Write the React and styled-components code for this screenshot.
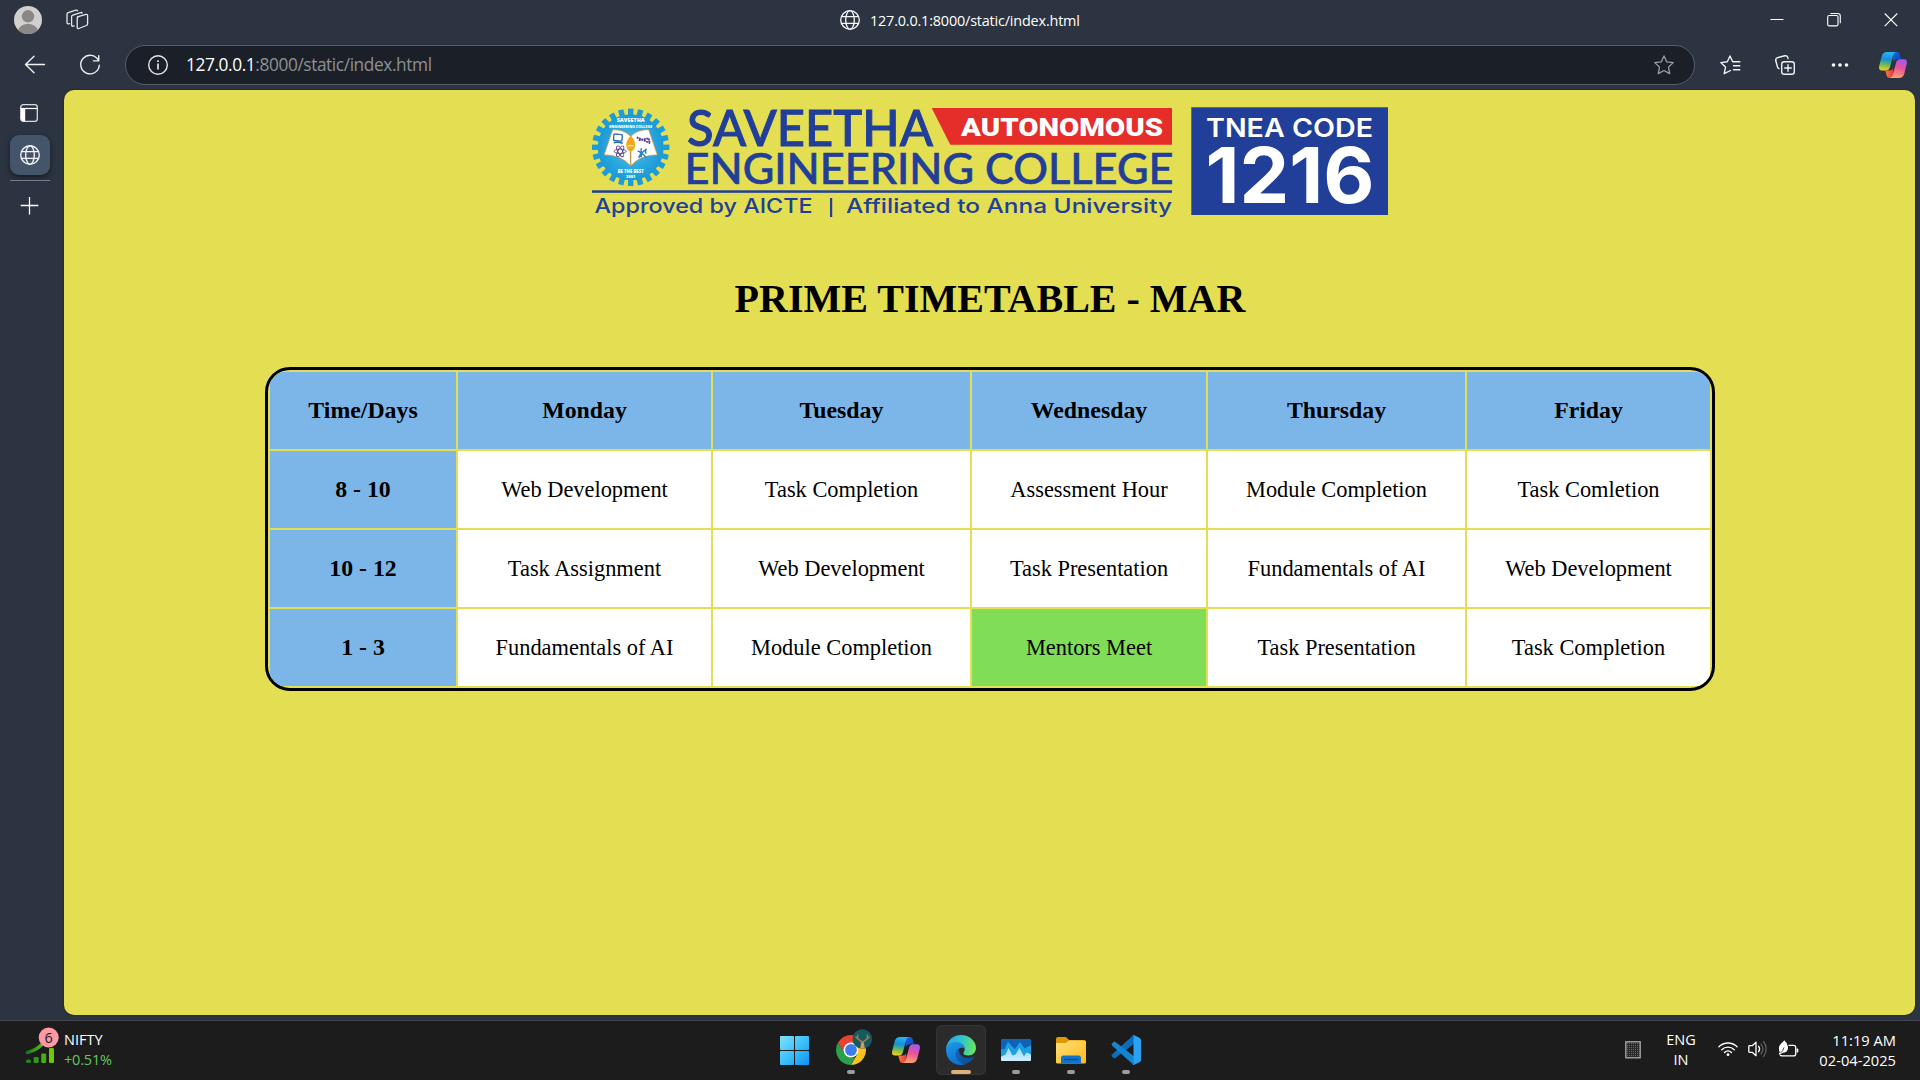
import React from "react";
import styled, { createGlobalStyle } from "styled-components";

const UI = `"Open Sans", "Noto Sans", sans-serif`;
const SERIF = `"Liberation Serif", "Times New Roman", serif`;

const GlobalStyle = createGlobalStyle`
  * { box-sizing: border-box; }
  html, body { margin: 0; padding: 0; background: #2b3440; overflow: hidden; }
  svg { display: block; flex: none; overflow: visible; }
`;

/* ---------- layout ---------- */
const Screen = styled.div`
  width: 1920px;
  height: 1080px;
  display: flex;
  flex-direction: column;
  background: #2b3440;
  font-family: ${UI};
  color: #fff;
  overflow: hidden;
`;

const TitleBar = styled.header`
  height: 40px;
  display: grid;
  grid-template-columns: 400px 1fr 400px;
  align-items: center;
`;

const TitleLeft = styled.div`
  display: flex;
  align-items: center;
  gap: 24px;
  padding-left: 14px;
`;

const TitleCenter = styled.div`
  display: flex;
  align-items: center;
  gap: 10px;
  justify-self: start;
  padding-left: 440px;
`;

const WindowButtons = styled.div`
  display: flex;
  justify-content: flex-end;
  align-items: center;
  gap: 43px;
  padding-right: 22px;
`;

const Label = styled.span`
  font-size: ${(p) => p.$size || 15}px;
  line-height: ${(p) => p.$line || 20}px;
  letter-spacing: ${(p) => p.$track || 0}px;
  padding-top: ${(p) => p.$top || 0}px;
  color: ${(p) => p.$color || "#fff"};
  white-space: nowrap;
`;

const ToolBar = styled.nav`
  height: 50px;
  display: flex;
  align-items: center;
  padding-left: 24px;
`;

const NavButtons = styled.div`
  display: flex;
  align-items: center;
  gap: 34px;
  width: 101px;
`;

const AddressBar = styled.div`
  width: 1570px;
  height: 40px;
  border: 1px solid #565d66;
  border-radius: 20px;
  background: #1b2028;
  display: flex;
  align-items: center;
  padding: 0 20px 0 22px;
`;

const Url = styled.div`
  flex: 1;
  padding-left: 18px;
  font-size: 17.3px;
  line-height: 24px;
  letter-spacing: -0.4px;
  color: #8d9094;
  strong {
    font-weight: 400;
    color: #fff;
  }
`;

const ToolIcons = styled.div`
  display: flex;
  align-items: center;
  padding-left: 25px;
`;

const ToolSlot = styled.span`
  margin-right: ${(p) => p.$after}px;
`;

const Body = styled.div`
  height: 930px;
  display: flex;
`;

const SideTabs = styled.aside`
  width: 64px;
  display: flex;
  flex-direction: column;
  padding: 14px 0 0 10px;
`;

const SideSlot = styled.div`
  width: 40px;
  height: ${(p) => p.$height}px;
  display: flex;
  justify-content: center;
  padding-right: 2px;
`;

const ActiveTab = styled.div`
  width: 40px;
  height: 40px;
  border-radius: 9px;
  background: #44546a;
  box-shadow: 0 2px 5px rgba(0, 0, 0, 0.5);
  display: flex;
  align-items: center;
  justify-content: center;
`;

const Divider = styled.hr`
  width: 40px;
  height: 1px;
  border: 0;
  margin: 5px 0 16px;
  background: #767d86;
`;

const Page = styled.main`
  width: 1851px;
  height: 925px;
  border-radius: 10px;
  background: #e3de52;
  box-shadow: 0 0 2px rgba(0, 0, 0, 0.5);
  display: flex;
  flex-direction: column;
  align-items: center;
  padding-top: 15px;
`;

const Banner = styled.div`
  margin-left: 2px;
`;

const Heading = styled.h1`
  margin: 54px 0 0 1px;
  font-family: ${SERIF};
  font-size: 40px;
  line-height: 48px;
  font-weight: 700;
  color: #000;
  white-space: nowrap;
`;

const TimeTable = styled.section`
  margin-top: 44px;
  width: 1450px;
  height: 324px;
  border: 3px solid #000;
  border-radius: 25px;
  padding: 2px;
  overflow: hidden;
  display: grid;
  grid-template-columns: 186px 253px 257px 234px 257px 243px;
  grid-auto-rows: 77px;
  gap: 2px;
`;

const CELL = { head: "#7cb6e9", plain: "#fff", meet: "#7fdd57" };

const Cell = styled.div`
  display: flex;
  align-items: center;
  justify-content: center;
  padding-left: 1px;
  background: ${(p) => CELL[p.$kind]};
  color: #000;
  font-family: ${SERIF};
  font-size: ${(p) => (p.$kind === "head" ? 23.8 : 22.4)}px;
  line-height: 27px;
  font-weight: ${(p) => (p.$kind === "head" ? 700 : 400)};
  white-space: nowrap;
`;

/* ---------- taskbar ---------- */
const TaskBar = styled.footer`
  height: 60px;
  background: #1c1c1c;
  border-top: 1px solid #43474b;
  display: grid;
  grid-template-columns: 771px 390px 1fr;
`;

const Widget = styled.div`
  display: flex;
  align-items: flex-start;
  gap: 10px;
  padding: 6px 0 0 26px;
`;

const Lines = styled.div`
  display: flex;
  flex-direction: column;
  align-items: ${(p) => p.$align || "flex-start"};
  width: ${(p) => (p.$width ? `${p.$width}px` : "auto")};
`;

const Apps = styled.div`
  display: flex;
  align-items: flex-start;
  gap: 5px;
  padding-top: 4px;
`;

const AppTile = styled.div`
  width: 50px;
  height: 50px;
  border-radius: 6px;
  background: ${(p) => (p.$active ? "#2b2b2b" : "transparent")};
  box-shadow: ${(p) => (p.$active ? "inset 0 0 0 1px #353535" : "none")};
  display: flex;
  flex-direction: column;
  align-items: center;
  justify-content: space-between;
  padding: 10px 0 1px;
`;

const AppIcon = styled.span`
  height: 30px;
  display: flex;
  align-items: center;
`;

const Running = styled.span`
  width: ${(p) => (p.$active ? 20 : 8)}px;
  height: 4px;
  border-radius: 2px;
  background: ${(p) => (p.$active ? "#dfae7d" : p.$on ? "#9b9b9b" : "transparent")};
`;

const Tray = styled.div`
  display: flex;
  justify-content: flex-end;
  align-items: flex-start;
  padding: 9px 24px 0 0;
`;

const TrayIcons = styled.div`
  display: flex;
  gap: 10px;
  align-items: center;
  padding: 10px 0 0 22px;
`;

const TraySquare = styled.div`
  padding: 11px 25px 0 0;
`;

/* ---------- line icons ---------- */
const Avatar = () => (
  <svg width="28" height="28" viewBox="0 0 28 28">
    <defs>
      <clipPath id="av"><circle cx="14" cy="14" r="14" /></clipPath>
    </defs>
    <circle cx="14" cy="14" r="14" fill="#d2d0ce" />
    <g clipPath="url(#av)" fill="#8a8886">
      <circle cx="14" cy="10.3" r="6.2" />
      <ellipse cx="14" cy="26.5" rx="10.3" ry="8.8" />
    </g>
  </svg>
);

const Workspaces = () => (
  <svg width="23" height="22" viewBox="0 0 23 22" fill="none" stroke="#e6e8ea" strokeWidth="1.3" strokeLinecap="round" strokeLinejoin="round">
    <path d="M11.3 7.9 20 5.4q1.6-.4 1.6 1.2v8.2q0 1.3-1.2 1.7l-7.6 3q-1.6.6-1.6-1.2V9.8q0-1.5 1.1-1.9z" />
    <path d="M8.2 16.9 7 17.2q-1.4.3-1.4-1.2V7.7q0-1.2 1.2-1.6l7.7-2.5q1.3-.4 1.7.6" />
    <path d="M3.5 14.6l-1 .2Q1 15 1 13.600V5.200Q1 4 2.200 3.600L9.900 1.200q1.300-.4 1.700.5" />
  </svg>
);

const Globe = () => (
  <svg width="20" height="20" viewBox="0 0 20 20" fill="none" stroke="#f3f4f5" strokeWidth="1.35">
    <circle cx="10" cy="10" r="9.3" />
    <ellipse cx="10" cy="10" rx="4.3" ry="9.3" />
    <path d="M1.500 6.600h17M1.500 13.400h17" />
  </svg>
);

const Minimize = () => (
  <svg width="14" height="14" viewBox="0 0 14 14"><path d="M.5 6.500h13" stroke="#fff" /></svg>
);
const Restore = () => (
  <svg width="14" height="14" viewBox="0 0 14 14" fill="none" stroke="#fff" strokeWidth="1.100">
    <rect x=".7" y="2.500" width="10.300" height="10.400" rx="1.500" />
    <path d="M3.400.5h7.300q2.600 0 2.600 2.600v7.200" />
  </svg>
);
const Close = () => (
  <svg width="14" height="14" viewBox="0 0 14 14"><path d="M.7.5l12.600 12.600M13.300.5.7 13.100" stroke="#fff" strokeWidth="1.100" /></svg>
);

const Back = () => (
  <svg width="22" height="20" viewBox="0 0 22 20" fill="none" stroke="#f0f1f2" strokeWidth="1.400" strokeLinecap="round" strokeLinejoin="round">
    <path d="M20.500 9.500H1.700M10 1.200 1.500 9.500 10 17.800" />
  </svg>
);
const Refresh = () => (
  <svg width="20" height="20" viewBox="0 0 20 20" fill="none" stroke="#f0f1f2" strokeWidth="1.400" strokeLinecap="round" strokeLinejoin="round">
    <path d="M18.300 5.300A9.300 9.300 0 1 0 19.300 10.200" />
    <path d="M18.700.8v5.100h-5.300" />
  </svg>
);
const Info = () => (
  <svg width="20" height="20" viewBox="0 0 20 20" fill="none" stroke="#e4e5e6" strokeWidth="1.400">
    <circle cx="10" cy="10" r="9.300" />
    <path d="M10 8.600V14.500M10 5.200v1.900" strokeWidth="1.700" />
  </svg>
);
const Star = () => (
  <svg width="20" height="20" viewBox="0 0 20 20" fill="none" stroke="#9a9da1" strokeWidth="1.300" strokeLinejoin="round">
    <path d="M10 .9l2.700 5.900 6.500.8-4.700 4.500 1.200 6.500L10 15.500l-5.700 3.100 1.200-6.500L.8 7.600l6.500-.8z" />
  </svg>
);
const StarList = () => (
  <svg width="21" height="20" viewBox="0 0 21 20" fill="none" stroke="#f0f1f2" strokeWidth="1.400" strokeLinecap="round" strokeLinejoin="round">
    <path d="M19.800 6.800H12.700L10 1 7.300 6.800.8 7.600l4.700 4.500-1.300 6.600 6.300-3.200" />
    <path d="M13.500 10.800h6.300M13.500 14.800h6.300" />
  </svg>
);
const Collections = () => (
  <svg width="20" height="20" viewBox="0 0 20 20" fill="none" stroke="#f0f1f2" strokeWidth="1.400" strokeLinecap="round" strokeLinejoin="round">
    <rect x="6.700" y="6.700" width="12.600" height="12.600" rx="2.600" />
    <path d="M13 9.700v6.600M9.700 13h6.600" />
    <path d="M3.900 13.700Q2.900 13.200 2.500 12L.8 5.800Q.3 3.400 2.500 2.700L9.800.8q2.300-.5 3 1.600l.3 1.200" />
  </svg>
);
const Dots = () => (
  <svg width="18" height="6" viewBox="0 0 18 6" fill="#fff">
    <circle cx="2.500" cy="3" r="1.800" /><circle cx="9" cy="3" r="1.800" /><circle cx="15.500" cy="3" r="1.800" />
  </svg>
);
const TabLayout = () => (
  <svg width="18" height="18" viewBox="0 0 18 18" fill="none">
    <rect x=".7" y=".7" width="16.600" height="16.600" rx="2.600" stroke="#d9dbde" strokeWidth="1.300" />
    <path d="M.7 4.500h16.600" stroke="#fff" strokeWidth="1.200" />
    <path d="M1 4.500h4.200v12.700H3Q1 17.200 1 15z" fill="#fff" />
  </svg>
);
const Plus = () => (
  <svg width="18" height="18" viewBox="0 0 18 18"><path d="M9.500 0v17.500M.7 8.500h17.600" stroke="#fff" strokeWidth="1.300" /></svg>
);

/* ---------- colour icons ---------- */
const Copilot = ({ id, size = 28 }) => (
  <svg width={size} height={size * 0.93} viewBox="0 0 28 26">
    <defs>
      <linearGradient id={`${id}a`} x1=".5" y1="0" x2=".35" y2="1">
        <stop offset="0" stopColor="#27b5f2" /><stop offset=".4" stopColor="#168fd8" /><stop offset=".65" stopColor="#5bb66b" /><stop offset="1" stopColor="#f5d20a" />
      </linearGradient>
      <linearGradient id={`${id}b`} x1=".7" y1="0" x2=".4" y2="1">
        <stop offset="0" stopColor="#a259f2" /><stop offset=".45" stopColor="#e6529b" /><stop offset="1" stopColor="#ffa269" />
      </linearGradient>
      <linearGradient id={`${id}c`} x1="0" y1="0" x2="1" y2="1">
        <stop offset="0" stopColor="#1a6be0" /><stop offset="1" stopColor="#0b3fb8" />
      </linearGradient>
      <linearGradient id={`${id}d`} x1="0" y1="0" x2="1" y2="0">
        <stop offset="0" stopColor="#ff7a3d" /><stop offset="1" stopColor="#e8324a" />
      </linearGradient>
    </defs>
    <path d="M13 0h5q2 0 2.700 2.200l1.500 5H17.500q-2.500 0-3.300 2.500z" fill={`url(#${id}c)`} />
    <path d="M15 26h-4.500q-2.200 0-2.800-2.300L6.300 18.500H11q2.200 0 3-2.300z" fill={`url(#${id}d)`} />
    <path d="M8 0h9q-2 .4-2.900 3.200L11 15q-1 3.500-4.200 3.500H3.200q-4 0-3-4.500L2.700 4.200Q4 0 8 0z" fill={`url(#${id}a)`} />
    <path d="M20 26h-9q2-.4 2.900-3.200L17 11q1-3.700 4.200-3.700h3.600q4 0 3 4.500L25.300 21.800Q24 26 20 26z" fill={`url(#${id}b)`} />
  </svg>
);

const Stocks = () => (
  <svg width="28" height="38" viewBox="0 0 28 38">
    <defs>
      <linearGradient id="stk" x1="0" x2="1"><stop offset="0" stopColor="#12781f" /><stop offset="1" stopColor="#72c80a" /></linearGradient>
    </defs>
    <path d="M1.500 25.500Q12 23 19 14" fill="none" stroke="url(#stk)" strokeWidth="3.600" strokeLinecap="round" />
    <rect x="0" y="32.500" width="5" height="3.500" rx="1.500" fill="#1c8620" />
    <rect x="7.700" y="30" width="5" height="6" rx="1.200" fill="#2f981c" />
    <rect x="15.200" y="26.500" width="5" height="9.500" rx="1.200" fill="#4cac14" />
    <rect x="23" y="21" width="5" height="15" rx="1.200" fill="#70c70a" />
    <circle cx="22.700" cy="10.500" r="10" fill="#ff99a4" />
    <text x="22.700" y="15.700" textAnchor="middle" fontFamily={UI} fontSize="14.500" fill="#1c1c1c">6</text>
  </svg>
);

const WindowsLogo = () => (
  <svg width="32" height="30" viewBox="0 0 32 30">
    <defs>
      <linearGradient id="win" gradientUnits="userSpaceOnUse" x1="0" y1="0" x2="30" y2="30"><stop offset="0" stopColor="#86e2fb" /><stop offset=".5" stopColor="#3dc1fa" /><stop offset="1" stopColor="#0a90f5" /></linearGradient>
    </defs>
    <g fill="url(#win)">
      <rect x="0" y="1" width="14" height="14" rx=".8" /><rect x="15" y="1" width="14" height="14" rx=".8" />
      <rect x="0" y="16" width="14" height="14" rx=".8" /><rect x="15" y="16" width="14" height="14" rx=".8" />
    </g>
  </svg>
);

const ChromeLogo = () => (
  <svg width="30" height="30" viewBox="0 0 30 30">
    <path d="M2.010 7.500A15 15 0 0 1 27.990 7.500H15L8.500 18.750z" fill="#e94235" />
    <path d="M27.990 7.500A15 15 0 0 1 15 30l6.500-11.250L15 7.500z" fill="#fcc31e" />
    <path d="M15 30A15 15 0 0 1 2.010 7.500L8.500 18.750 15 22.500h4.330z" fill="#2aa04a" />
    <circle cx="15" cy="15" r="7.500" fill="#fff" />
    <circle cx="15" cy="15" r="5.900" fill="#3b7ded" />
    <circle cx="26.300" cy="4" r="9.800" fill="#155a5e" />
    <path d="M24.800 13.500l.8-6.500-4.500-3.500M28.200 13.500l-.9-6.500 4.500-3.500M21.500-.5l.5 4.500 4.500 3 4.500-3 .5-4.500M19.500 1.500l2 2M33.500 1.500l-2 2" fill="none" stroke="#a9794c" strokeWidth="1.300" />
    <path d="M24.400 13.600l1-6h2.200l1 6z" fill="#d39a5e" />
  </svg>
);

const EdgeLogo = () => (
  <svg width="30" height="30" viewBox="0 0 30 30">
    <defs>
      <linearGradient id="eg1" x1="0" y1=".4" x2="1" y2=".5"><stop offset="0" stopColor="#2aa5e3" /><stop offset=".5" stopColor="#2fc2cf" /><stop offset="1" stopColor="#6ae75a" /></linearGradient>
      <linearGradient id="eg2" x1="0" y1="0" x2=".5" y2="1"><stop offset="0" stopColor="#1e9be6" /><stop offset="1" stopColor="#0b70cf" /></linearGradient>
      <linearGradient id="eg3" x1="0" y1="0" x2="1" y2="1"><stop offset="0" stopColor="#1565bd" /><stop offset="1" stopColor="#0d4a92" /></linearGradient>
    </defs>
    <path d="M0 14.500C.4 6 7 0 15 0c8.500 0 15 6.200 15 13 0 4.500-3.300 7.500-7.700 7.500-3.500 0-5-1.200-5-2.200 0-1 1.400-1.600 1.400-4.300C18.700 10.500 15 8 10.500 8 5 8 1 11 0 14.500z" fill="url(#eg1)" />
    <path d="M0 15C.2 10.500 4.500 7 9.800 7c5 0 8.900 3 8.900 7-1.500-2.300-6.700-2-7.700 3.200C10 23.500 14.500 28.500 20 29c-1.500.7-3.200 1-5 1C6.500 30 0 23.500 0 15z" fill="url(#eg2)" />
    <path d="M12.600 13.400C7 17.500 9.500 28 20 29c3.500-1.300 6.500-3.800 7.700-6.200.4-.9-.3-1.300-1-.9-6 3.200-14.200 0-14.100-8.500z" fill="url(#eg3)" />
  </svg>
);

const MonitorLogo = () => (
  <svg width="30" height="30" viewBox="0 0 30 30">
    <defs>
      <linearGradient id="mn" x1="0" y1="0" x2="0" y2="1"><stop offset="0" stopColor="#9fdcf8" /><stop offset="1" stopColor="#cdeefd" /></linearGradient>
    </defs>
    <rect y="4" width="30" height="22" rx="1" fill="#0f62b4" />
    <path d="M0 14l3.500.5L7 6.500l4 5 3 2.500 5-7 4.500 6.500L30 10v15H0z" fill="#1f9fe3" />
    <path d="M0 21.500l4.500-1.700L7.500 13l4 7.500 3-1 4-6.500 4.500 8.500 2.500-4 4.500 2V25q0 1-1 1H1q-1 0-1-1z" fill="url(#mn)" />
  </svg>
);

const FolderLogo = () => (
  <svg width="30" height="30" viewBox="0 0 30 30">
    <defs>
      <linearGradient id="fo" x1="0" y1="0" x2="1" y2="1"><stop offset="0" stopColor="#ffe07a" /><stop offset="1" stopColor="#fbb917" /></linearGradient>
    </defs>
    <path d="M0 4q0-2 2-2h7q1 0 2 1l2 2h14q3 0 3 2v8H0z" fill="#dd9a06" />
    <path d="M0 8h10l3-2.500h15.500Q30 5.500 30 7v20q0 1.500-1.500 1.500h-27Q0 28.500 0 27z" fill="url(#fo)" />
    <path d="M5 28.500V23q0-2.500 2.500-2.500h15Q25 20.500 25 23v5.500z" fill="#1173c9" />
    <path d="M8.500 24.500h13" stroke="#0b4f98" strokeWidth="1.300" strokeLinecap="round" />
  </svg>
);

const CodeLogo = () => (
  <svg width="30" height="30" viewBox="0 0 30 30">
    <path d="M22 .5 1 19.600q-1 1 0 2l1.600 1.500q.8.700 1.800 0L24 8z" fill="#0a6fb8" />
    <path d="M22 29.500 1 10.400q-1-1 0-2L2.600 6.900q.8-.7 1.800 0L24 22z" fill="#1485d1" />
    <path d="M21.500.3q.8-.5 1.800 0l5.400 2.600Q30 3.600 30 5v20q0 1.400-1.300 2.100l-5.400 2.600q-1.200.5-2-.3 1.200.4 1.200-1.200V1.800q0-1.600-1-1.500z" fill="#2aa2f2" />
  </svg>
);

const TrayGrid = () => (
  <svg width="16" height="18" viewBox="0 0 16 18">
    <defs>
      <pattern id="dotgrid" width="2" height="2" patternUnits="userSpaceOnUse"><rect width="2" height="2" fill="#2b2b2b" /><rect width="1" height="1" fill="#626262" /></pattern>
    </defs>
    <rect x=".8" y=".8" width="14.400" height="16" fill="url(#dotgrid)" stroke="#a9a9a9" strokeWidth="1.300" />
  </svg>
);
const Wifi = () => (
  <svg width="20" height="16" viewBox="0 0 20 16" fill="none" stroke="#fff" strokeWidth="1.400" strokeLinecap="round">
    <path d="M.9 5.700a13 13 0 0 1 18.200 0M3.700 8.700a9 9 0 0 1 12.600 0M6.500 11.500a5 5 0 0 1 7 0" />
    <circle cx="10" cy="13.700" r="1.400" fill="#fff" stroke="none" />
  </svg>
);
const Speaker = () => (
  <svg width="20" height="18" viewBox="0 0 20 18" fill="none" stroke="#fff" strokeWidth="1.300" strokeLinecap="round" strokeLinejoin="round">
    <path d="M.8 6.400q0-.7.700-.7h2.700L8 2.300v13.400l-3.800-3.400H1.500q-.7 0-.7-.7z" />
    <path d="M10.600 6.300a4.500 4.500 0 0 1 0 5.400" />
    <path d="M13 4.100a8 8 0 0 1 0 9.800M15.500 1.500a12 12 0 0 1 0 15" stroke="#5d5d5d" />
  </svg>
);
const Battery = () => (
  <svg width="22" height="18" viewBox="0 0 22 18" fill="none" stroke="#fff" strokeWidth="1.300">
    <path d="M10.500 5.300H15.500q2.200 0 2.200 2v6.400q0 2.200-2.200 2.200H4.300Q2.500 15.900 2 14.700" />
    <path d="M18.600 8.500h.8q.9 0 .9.900v2.200q0 .9-.9.900h-.8z" fill="#fff" stroke="none" />
    <path d="M6.200.3Q9.500 3 10 7q.2 4.500-3.500 5.600L4.300 13 1.500 14.700.8 13.600l1-1Q-.6 6.700 3.600 3 5.300 1.700 6.200.3z" fill="#fff" stroke="none" />
    <path d="M2.500 13Q5 11 6 7.500" stroke="#1c1c1c" strokeWidth=".8" />
  </svg>
);

/* ---------- college banner ---------- */
const NAVY = "#213f99";

const TEETH = Array.from({ length: 24 }, (_, i) => i * 15);

const CollegeBanner = () => (
  <svg width="797" height="116" viewBox="592 105 797 116" role="img">
    <defs>
      <radialGradient id="gear"><stop offset="0" stopColor="#4cc0ec" /><stop offset="1" stopColor="#1b9ad6" /></radialGradient>
    </defs>
    <g transform="translate(630.7 147.300)">
      {TEETH.map((a) => (
        <rect key={a} x="-2.700" y="-38.700" width="5.400" height="9" fill="#1f9cd8" transform={`rotate(${a})`} />
      ))}
      <circle r="33" fill="url(#gear)" />
      <g fill="#fff" textAnchor="middle" fontFamily={`"Open Sans", sans-serif`} fontWeight="800">
        <text y="-25" fontSize="5.600" textLength="28" lengthAdjust="spacingAndGlyphs" x="0">SAVEETHA</text>
        <text y="-19.300" fontSize="3.600" textLength="43" lengthAdjust="spacingAndGlyphs" x="0">ENGINEERING COLLEGE</text>
        <text y="25.700" fontSize="4.600" textLength="26" lengthAdjust="spacingAndGlyphs" x="0">BE THE BEST</text>
        <text y="30.500" fontSize="4" x="0">2001</text>
      </g>
      <path d="M-18-17.500Q-7-18 0-11 7-18 18-17.500L26.500 7.500Q10 7.500 0 18.500-10 7.500-26.500 7.500z" fill="#fff" stroke="#d99b3c" strokeWidth=".7" />
      <path d="M0-11v29" stroke="#b98532" strokeWidth="1.100" />
      <path d="M0-12q6 7 4 12.500Q2.500 4 0 4T-4 .5Q-6-5 0-12z" fill="#f3a71b" />
      <path d="M-3-1.500h6" stroke="#fff" strokeWidth="1" />
      <g fill="none" stroke="#2b6fb5" strokeWidth="1.400">
        <rect x="-17" y="-13" width="8.500" height="6.500" rx="1" transform="rotate(5 -13 -10)" />
        <path d="M-17-4.500q4-1.500 9 .5" strokeWidth="1.700" />
      </g>
      <g fill="none" stroke="#5a3c94" strokeWidth=".9">
        <ellipse cx="-10.500" cy="4" rx="6" ry="2.200" />
        <ellipse cx="-10.500" cy="4" rx="6" ry="2.200" transform="rotate(60 -10.500 4)" />
        <ellipse cx="-10.500" cy="4" rx="6" ry="2.200" transform="rotate(120 -10.500 4)" />
        <path d="M6-10l7 3 6.500 3M8-7l10-2 1 5" strokeWidth="1.800" strokeDasharray="2 .6" />
      </g>
      <path d="M7 3.500l4 2 5-4M8 10.500l2.500-5 5.500 5M10.500 1v9M15 2.500v4" fill="none" stroke="#2b83c5" strokeWidth="1.500" />
    </g>

    <g fill={NAVY} fontFamily="Lato, sans-serif">
      <text x="687" y="146" fontSize="51" fontWeight="500" stroke={NAVY} strokeWidth="1" textLength="246" lengthAdjust="spacingAndGlyphs">SAVEETHA</text>
      <text x="684.500" y="183.500" fontSize="42" fontWeight="500" stroke={NAVY} strokeWidth=".6" textLength="489" lengthAdjust="spacingAndGlyphs">ENGINEERING COLLEGE</text>
    </g>
    <rect x="592" y="190.300" width="580" height="2.500" fill={NAVY} />
    <g fill={NAVY} fontFamily="Inter, sans-serif" fontSize="20.300" fontWeight="500">
      <text x="594.500" y="212.700" textLength="218" lengthAdjust="spacingAndGlyphs">Approved by AICTE</text>
      <text x="846" y="212.700" textLength="326" lengthAdjust="spacingAndGlyphs">Affiliated to Anna University</text>
      <rect x="830" y="198" width="2.200" height="19" />
    </g>

    <path d="M931.700 108H1172v36.700H950.300z" fill="#e52d2a" />
    <text x="961" y="135.500" fill="#fff" fontFamily="Roboto, sans-serif" fontWeight="900" fontSize="26.500" textLength="202" lengthAdjust="spacingAndGlyphs">AUTONOMOUS</text>

    <rect x="1191.300" y="107.300" width="196.700" height="107.700" fill={NAVY} />
    <text x="1206" y="137" fill="#fff" fontFamily="Inter, sans-serif" fontWeight="600" fontSize="25.500" textLength="167" lengthAdjust="spacingAndGlyphs">TNEA CODE</text>
    <text x="1205.500" y="203.300" fill="#fff" fontFamily="Inter, sans-serif" fontWeight="700" fontSize="77.500" textLength="169" lengthAdjust="spacingAndGlyphs">1216</text>
  </svg>
);

/* ---------- data ---------- */
const DAYS = ["Time/Days", "Monday", "Tuesday", "Wednesday", "Thursday", "Friday"];
const SLOTS = [
  ["8 - 10", "Web Development", "Task Completion", "Assessment Hour", "Module Completion", "Task Comletion"],
  ["10 - 12", "Task Assignment", "Web Development", "Task Presentation", "Fundamentals of AI", "Web Development"],
  ["1 - 3", "Fundamentals of AI", "Module Completion", "Mentors Meet", "Task Presentation", "Task Completion"],
];
const kindOf = (text, col) => (col === 0 ? "head" : text === "Mentors Meet" ? "meet" : "plain");

const APPS = [
  { name: "start", icon: <WindowsLogo /> },
  { name: "chrome", icon: <ChromeLogo />, on: true },
  { name: "copilot", icon: <Copilot id="cpb" /> },
  { name: "edge", icon: <EdgeLogo />, active: true },
  { name: "monitor", icon: <MonitorLogo />, on: true },
  { name: "files", icon: <FolderLogo />, on: true },
  { name: "code", icon: <CodeLogo />, on: true },
];

export default function App() {
  return (
    <Screen>
      <GlobalStyle />
      <TitleBar>
        <TitleLeft>
          <Avatar />
          <Workspaces />
        </TitleLeft>
        <TitleCenter>
          <Globe />
          <Label $size={14.4} $track={-0.17} $top={1}>127.0.0.1:8000/static/index.html</Label>
        </TitleCenter>
        <WindowButtons>
          <Minimize />
          <Restore />
          <Close />
        </WindowButtons>
      </TitleBar>

      <ToolBar>
        <NavButtons>
          <Back />
          <Refresh />
        </NavButtons>
        <AddressBar>
          <Info />
          <Url><strong>127.0.0.1</strong>:8000/static/index.html</Url>
          <Star />
        </AddressBar>
        <ToolIcons>
          <ToolSlot $after={34}><StarList /></ToolSlot>
          <ToolSlot $after={36}><Collections /></ToolSlot>
          <ToolSlot $after={30}><Dots /></ToolSlot>
          <Copilot id="cpa" />
        </ToolIcons>
      </ToolBar>

      <Body>
        <SideTabs>
          <SideSlot $height={31}><TabLayout /></SideSlot>
          <ActiveTab><Globe /></ActiveTab>
          <Divider />
          <SideSlot $height={18}><Plus /></SideSlot>
        </SideTabs>
        <Page>
          <Banner><CollegeBanner /></Banner>
          <Heading>PRIME TIMETABLE - MAR</Heading>
          <TimeTable>
            {DAYS.map((d) => <Cell key={d} $kind="head">{d}</Cell>)}
            {SLOTS.map((row) =>
              row.map((text, col) => <Cell key={row[0] + col} $kind={kindOf(text, col)}>{text}</Cell>)
            )}
          </TimeTable>
        </Page>
      </Body>

      <TaskBar>
        <Widget>
          <Stocks />
          <Lines>
            <Label $size={14.5} $line={26}>NIFTY</Label>
            <Label $size={14.5} $line={14} $track={-0.2} $color="#65c466">+0.51%</Label>
          </Lines>
        </Widget>
        <Apps>
          {APPS.map((a) => (
            <AppTile key={a.name} $active={a.active}>
              <AppIcon>{a.icon}</AppIcon>
              <Running $active={a.active} $on={a.on} />
            </AppTile>
          ))}
        </Apps>
        <Tray>
          <TraySquare><TrayGrid /></TraySquare>
          <Lines $align="center" $width={30}>
            <Label $size={14.5}>ENG</Label>
            <Label $size={14.5}>IN</Label>
          </Lines>
          <TrayIcons>
            <Wifi />
            <Speaker />
            <Battery />
          </TrayIcons>
          <Lines $align="flex-end" $width={96}>
            <Label $size={14.7}>11:19 AM</Label>
            <Label $size={14.7}>02-04-2025</Label>
          </Lines>
        </Tray>
      </TaskBar>
    </Screen>
  );
}
